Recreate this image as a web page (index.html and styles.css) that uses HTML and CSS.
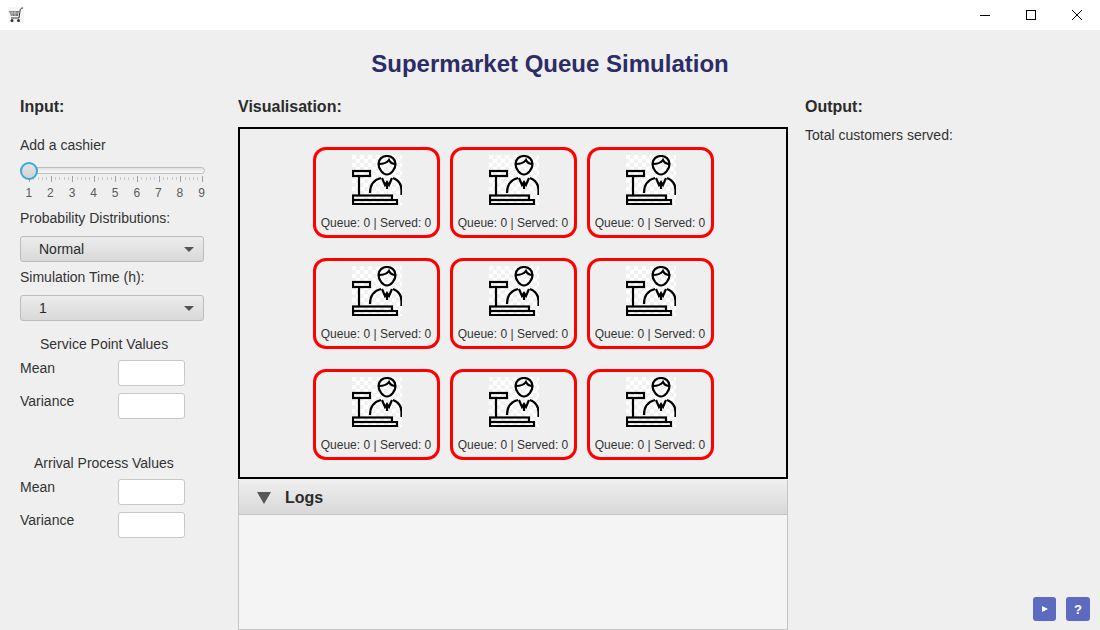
FILE: index.html
```html
<!DOCTYPE html>
<html lang="en">
<head>
    <meta charset="UTF-8">
    <title>Supermarket Queue Simulation</title>
    <link rel="stylesheet" href="styles.css">
</head>
<body>
    <svg class="defs" width="0" height="0">
        <symbol id="cashier" viewBox="0 0 50 50">
            <g fill="none" stroke="#000" stroke-width="2.200">
                <rect x="1" y="16" width="17" height="5"/>
                <path d="M7 21V40"/>
                <rect x="1" y="40.500" width="39" height="4.500"/>
                <path d="M1 45V49H45V45H40"/>
                <path d="M26.500 9C26.500 4 30.500 1 35 1C39.500 1 43.500 4 43.500 9C43.500 14 39 19.500 35 19.500C31 19.500 26.500 14 26.500 9Z"/>
                <path d="M26.500 9C31 9 35 8 37 5C38 7 40 9 43.500 9"/>
                <path d="M18 38C18 30 21 25 29 23M49.500 40V35C49.500 29 46 25 41 23"/>
                <path d="M30 23L33 30L35 27L37 30L40 23M35 28V34"/>
            </g>
        </symbol>
    </svg>

    <div class="titlebar">
        <svg class="app-icon" width="16" height="16" viewBox="0 0 16 16">
            <rect width="16" height="16" fill="#f6f6f6"/>
            <path d="M1 4H11L10 9H3Z" fill="#777"/>
            <path d="M2 6H11M4 4V9M7 4V9" stroke="#ddd" stroke-width="0.7"/>
            <path d="M15 1C13 1 12 2 12 4L11 11H3" fill="none" stroke="#333" stroke-width="1"/>
            <circle cx="4" cy="13.500" r="1.500" fill="#333"/>
            <circle cx="10.500" cy="13.500" r="1.500" fill="#333"/>
        </svg>
        <div class="window-controls">
            <span class="win-btn"><svg width="10" height="10" viewBox="0 0 10 10"><path d="M0 5.500H10" stroke="#000"/></svg></span>
            <span class="win-btn"><svg width="10" height="10" viewBox="0 0 10 10"><rect x="0.500" y="0.500" width="9" height="9" fill="none" stroke="#000"/></svg></span>
            <span class="win-btn"><svg width="10" height="10" viewBox="0 0 10 10"><path d="M0 0L10 10M10 0L0 10" stroke="#000"/></svg></span>
        </div>
    </div>

    <div class="app">
        <h1 class="app-title">Supermarket Queue Simulation</h1>
        <div class="columns">
            <section class="col-input">
                <h2>Input:</h2>
                <p class="label cashier-label">Add a cashier</p>
                <div class="slider">
                    <div class="track"></div>
                    <div class="thumb"></div>
                    <div class="ticks"></div>
                    <div class="tick-labels">
                        <span>1</span><span>2</span><span>3</span><span>4</span><span>5</span><span>6</span><span>7</span><span>8</span><span>9</span>
                    </div>
                </div>
                <p class="label dist-label">Probability Distributions:</p>
                <div class="combo"><span>Normal</span><i class="combo-arrow"></i></div>
                <p class="label time-label">Simulation Time (h):</p>
                <div class="combo"><span>1</span><i class="combo-arrow"></i></div>
                <p class="label group-label service-label">Service Point Values</p>
                <div class="field first"><label>Mean</label><input type="text"></div>
                <div class="field"><label>Variance</label><input type="text"></div>
                <p class="label group-label arrival-label">Arrival Process Values</p>
                <div class="field first"><label>Mean</label><input type="text"></div>
                <div class="field"><label>Variance</label><input type="text"></div>
            </section>

            <section class="col-vis">
                <h2>Visualisation:</h2>
                <div class="board">
                    <div class="card"><svg class="cashier-icon"><use href="#cashier"/></svg><span>Queue: 0 | Served: 0</span></div>
                    <div class="card"><svg class="cashier-icon"><use href="#cashier"/></svg><span>Queue: 0 | Served: 0</span></div>
                    <div class="card"><svg class="cashier-icon"><use href="#cashier"/></svg><span>Queue: 0 | Served: 0</span></div>
                    <div class="card"><svg class="cashier-icon"><use href="#cashier"/></svg><span>Queue: 0 | Served: 0</span></div>
                    <div class="card"><svg class="cashier-icon"><use href="#cashier"/></svg><span>Queue: 0 | Served: 0</span></div>
                    <div class="card"><svg class="cashier-icon"><use href="#cashier"/></svg><span>Queue: 0 | Served: 0</span></div>
                    <div class="card"><svg class="cashier-icon"><use href="#cashier"/></svg><span>Queue: 0 | Served: 0</span></div>
                    <div class="card"><svg class="cashier-icon"><use href="#cashier"/></svg><span>Queue: 0 | Served: 0</span></div>
                    <div class="card"><svg class="cashier-icon"><use href="#cashier"/></svg><span>Queue: 0 | Served: 0</span></div>
                </div>
                <div class="logs">
                    <div class="logs-head"><i class="logs-arrow"></i><span>Logs</span></div>
                    <div class="logs-body"></div>
                </div>
            </section>

            <section class="col-output">
                <h2>Output:</h2>
                <p class="label total-label">Total customers served:</p>
                <div class="actions">
                    <button class="action play"><i class="play-arrow"></i></button>
                    <button class="action help">?</button>
                </div>
            </section>
        </div>
    </div>
</body>
</html>
```

FILE: styles.css
```css
* {
    box-sizing: border-box;
}
html, body {
    margin: 0;
    height: 630px;
    overflow: hidden;
}
body {
    font-family: "Liberation Sans", Arial, sans-serif;
    font-size: 14px;
    color: #333;
    background: #efefef;
}
.defs {
    display: block;
    height: 0;
}

/* window frame */
.titlebar {
    height: 30px;
    background: #fff;
    display: flex;
    align-items: center;
    justify-content: space-between;
    padding-left: 8px;
}
.window-controls {
    display: flex;
}
.win-btn {
    width: 46px;
    height: 30px;
    display: flex;
    align-items: center;
    justify-content: center;
}

/* main */
.app {
    height: 600px;
    display: flex;
    flex-direction: column;
}
.app-title {
    margin: 0;
    height: 68px;
    padding-top: 19px;
    line-height: 30px;
    font-size: 24px;
    font-weight: bold;
    text-align: center;
    color: #2c2c68;
}
.columns {
    flex: 1;
    min-height: 0;
    display: flex;
}
h2 {
    margin: 0;
    font-size: 16px;
    line-height: 18px;
    font-weight: bold;
    color: #2b2b2b;
}
.label {
    margin: 0;
    line-height: 16px;
}

/* left column */
.col-input {
    width: 238px;
    padding-left: 20px;
}
.cashier-label { margin-top: 21px; }
.dist-label { margin-top: 10px; }
.time-label { margin-top: 7px; }
.group-label { white-space: nowrap; }
.service-label { margin-top: 15px; padding-left: 20px; }
.arrival-label { margin-top: 36px; padding-left: 14px; }

.slider {
    position: relative;
    width: 186px;
    height: 40px;
    margin-top: 7px;
    padding-top: 7px;
}
.track {
    width: 185px;
    height: 7px;
    border: 1px solid #bdbdbd;
    border-radius: 4px;
    background: linear-gradient(#e2e2e2, #fafafa);
}
.thumb {
    position: absolute;
    left: 0;
    top: 2px;
    width: 18px;
    height: 18px;
    border: 2px solid #3aa9d8;
    border-radius: 50%;
    background: linear-gradient(#e4e4e4, #d2d2d2);
}
.ticks {
    width: 174px;
    height: 6px;
    margin: 2px 0 0 9px;
    background:
        repeating-linear-gradient(90deg, #a0a0a0 0 1px, transparent 1px 21.6px) 0 0 / 100% 6px no-repeat,
        repeating-linear-gradient(90deg, #cacaca 0 1px, transparent 1px 4.32px) 0 1px / 100% 3px no-repeat;
}
.tick-labels {
    display: grid;
    grid-template-columns: repeat(9, 21.6px);
    margin: 4px 0 0 -2px;
    font-size: 12px;
    line-height: 14px;
    color: #5a5a5a;
    text-align: center;
}

.combo {
    width: 184px;
    height: 26px;
    margin-top: 10px;
    padding: 0 9px 0 18px;
    display: flex;
    align-items: center;
    justify-content: space-between;
    border: 1px solid #bcbcbc;
    border-radius: 3px;
    background: linear-gradient(#ececec, #d9d9d9);
    color: #2b2b2b;
}
.combo-arrow {
    width: 0;
    height: 0;
    border-left: 5px solid transparent;
    border-right: 5px solid transparent;
    border-top: 5px solid #555;
}

.field {
    display: flex;
    margin-top: 7px;
}
.field.first {
    margin-top: 8px;
}
.field label {
    width: 98px;
    line-height: 16px;
}
.field input {
    width: 67px;
    height: 26px;
    padding: 0;
    border: 1px solid #c8c8c8;
    border-radius: 3px;
    background: #fff;
}

/* centre column */
.col-vis {
    width: 550px;
    display: flex;
    flex-direction: column;
}
.board {
    height: 352px;
    margin-top: 11px;
    padding-top: 18px;
    border: 2px solid #000;
    display: grid;
    grid-template-columns: repeat(3, 127px);
    grid-auto-rows: 91px;
    column-gap: 10px;
    row-gap: 20px;
    justify-content: center;
    align-content: start;
}
.card {
    border: 3px solid #f00;
    border-radius: 13px;
    padding-top: 5px;
    display: flex;
    flex-direction: column;
    align-items: center;
    font-size: 12px;
    line-height: 14px;
    color: #333;
    white-space: nowrap;
}
.card span {
    margin-top: 11px;
}
.cashier-icon {
    width: 50px;
    height: 50px;
    flex: none;
    margin-left: 1px;
    background: repeating-conic-gradient(#f1f1f1 0 25%, #fff 0 50%) 0 0 / 8px 8px;
}
.logs {
    flex: 1;
    margin-top: 1px;
    display: flex;
    flex-direction: column;
}
.logs-head {
    height: 35px;
    display: flex;
    align-items: center;
    padding: 1px 0 0 18px;
    border: 1px solid #c4c4c4;
    border-width: 0 1px 1px;
    background: linear-gradient(#efefef, #d8d8d8);
    font-size: 16px;
    font-weight: bold;
    color: #2b2b2b;
}
.logs-arrow {
    width: 0;
    height: 0;
    margin-right: 14px;
    border-left: 7.500px solid transparent;
    border-right: 7.500px solid transparent;
    border-top: 12px solid #585858;
}
.logs-body {
    flex: 1;
    background: #f4f4f4;
    border: 1px solid #c4c4c4;
    border-top: none;
}

/* right column */
.col-output {
    flex: 1;
    padding: 0 10px 9px 17px;
    display: flex;
    flex-direction: column;
}
.total-label {
    margin-top: 11px;
}
.actions {
    margin-top: auto;
    display: flex;
    justify-content: flex-end;
    gap: 10px;
}
.action {
    width: 24px;
    height: 24px;
    padding: 0;
    border: none;
    border-radius: 3px;
    background: #5c6bc0;
    color: #fff;
    font-family: inherit;
    font-size: 13px;
    font-weight: bold;
    display: flex;
    align-items: center;
    justify-content: center;
}
.action.play {
    width: 23px;
}
.play-arrow {
    width: 0;
    height: 0;
    border-top: 3px solid transparent;
    border-bottom: 3px solid transparent;
    border-left: 6px solid #fff;
}
```
